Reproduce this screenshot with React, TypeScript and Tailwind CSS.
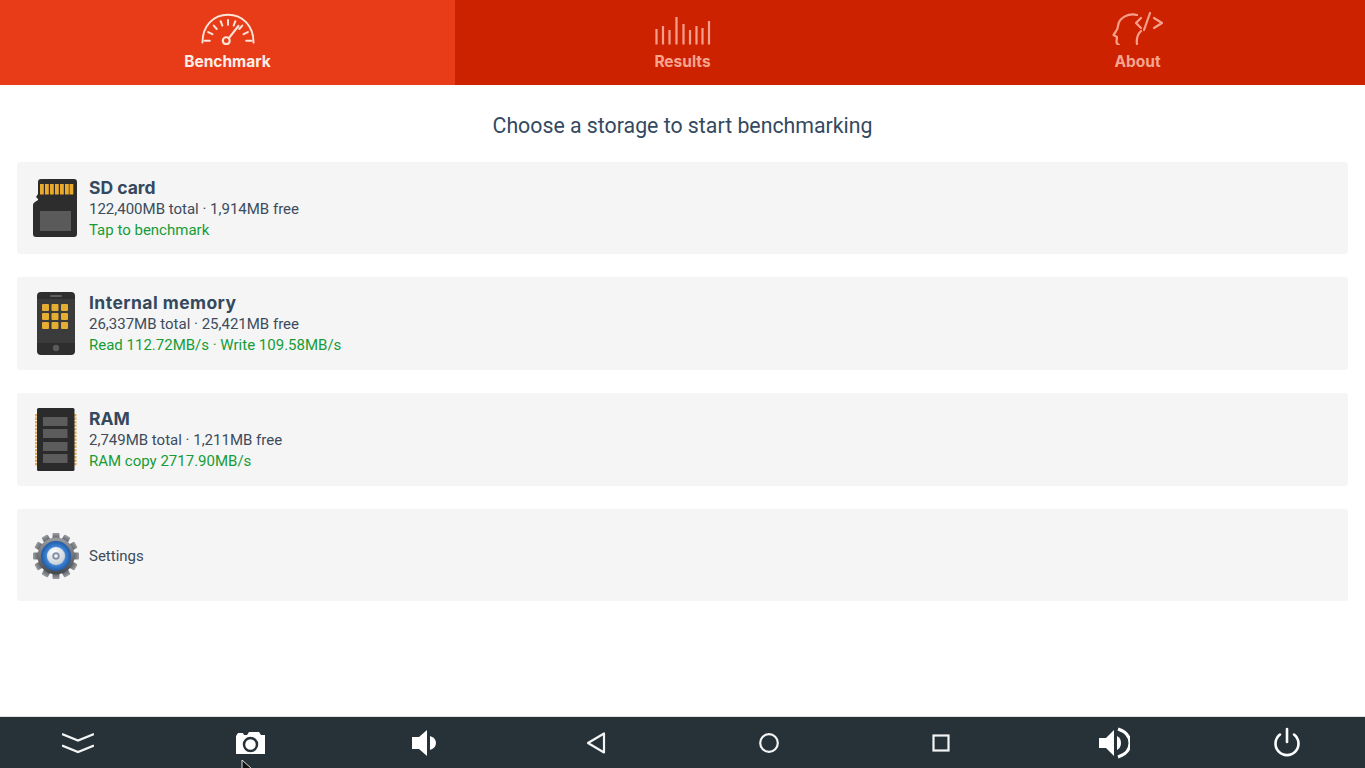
import React from "react";

function Gauge() {
  const ticks = [
    [4, 32, 10, 32], [8, 22, 13, 24.5], [14.500, 14.500, 18, 18.500], [22.500, 9.500, 24.500, 14.500], [31, 8, 31, 13.500],
    [39.500, 9.500, 37.500, 14.500], [47.500, 14.500, 44, 18.500], [54, 22, 49, 24.500], [58, 32, 52, 32],
  ];
  return (
    <svg width="54" height="32" viewBox="0 0 62 37" fill="none" stroke="#fde3d8" strokeWidth="2.300" strokeLinecap="round">
      <path d="M1.500 34 C1.500 15 14 2 31 2 C48 2 60.500 15 60.500 34" />
      {ticks.map((t, i) => (
        <line key={i} x1={t[0]} y1={t[1]} x2={t[2]} y2={t[3]} />
      ))}
      <circle cx="29" cy="32" r="4" strokeWidth="2.500" />
      <line x1="32" y1="29" x2="43" y2="15" strokeWidth="2.500" />
    </svg>
  );
}

function Bars() {
  const bars: [number, number][] = [
    [1.500, 12], [8, 9], [14.500, 13], [21.500, 0], [28.500, 7], [35, 13], [41.500, 9], [47.500, 11], [54, 4],
  ];
  return (
    <svg width="56" height="28" viewBox="0 0 56 28" fill="none" stroke="#f5a08a" strokeWidth="2.200">
      {bars.map((b, i) => (
        <line key={i} x1={b[0]} y1={b[1]} x2={b[0]} y2="27.500" />
      ))}
    </svg>
  );
}

function Head() {
  return (
    <svg width="52" height="34" viewBox="0 0 52 34" fill="none" stroke="#f5a08a" strokeWidth="2.200" strokeLinecap="round" strokeLinejoin="round">
      <path d="M25 4 C17 2 7 6 6 15 C6 19 3 21 1.500 24 L5 26 L4.500 31 C4.500 33 6 33.500 7 34" />
      <path d="M29 20 C26 23 24 27 25 33" />
      <path d="M29 7 L24 12 L29 17" />
      <path d="M38 2 L32 19" />
      <path d="M42 7 L50 12 L42 17" />
    </svg>
  );
}

function SdIcon() {
  return (
    <svg width="46" height="58" viewBox="0 0 46 58">
      <path d="M5 3 Q5 0 8 0 L41 0 Q44 0 44 3 L44 55 Q44 58 41 58 L3 58 Q0 58 0 55 L0 26 Q0 24 2 23 L5 21 L5 20 L3 18 L5 15 Z" fill="#2d2d2d" />
      {[7, 12, 17, 22, 27, 32, 36.500].map((x) => (
        <rect key={x} x={x} y="5" width="3.800" height="10.500" fill="#e9a92c" />
      ))}
      <rect x="7" y="32" width="31" height="20" fill="#5a5a5a" />
    </svg>
  );
}

function PhoneIcon() {
  const dots = [0, 1, 2];
  return (
    <svg width="38" height="63" viewBox="0 0 38 63">
      <rect x="0" y="0" width="38" height="63" rx="4" fill="#2e2e2e" />
      <rect x="0" y="7" width="38" height="44" fill="#3b3b3b" />
      <rect x="13" y="3" width="12" height="2" rx="1" fill="#5d5d5d" />
      {dots.map((r) =>
        dots.map((c) => <rect key={`${r}${c}`} x={5 + c * 9.500} y={12 + r * 9} width="7" height="7" rx="1" fill="#e6ad33" />)
      )}
      <circle cx="19" cy="56" r="3.200" fill="#5a5a5a" />
    </svg>
  );
}

function RamIcon() {
  return (
    <svg width="42" height="63" viewBox="0 0 42 63">
      {[...Array(15)].map((_, i) => (
        <g key={i}>
          <rect x="0" y={6 + i * 3.500} width="2.500" height="2.400" fill="#e2ad4d" />
          <rect x="39" y={6 + i * 3.500} width="2.500" height="2.400" fill="#e2ad4d" />
        </g>
      ))}
      <rect x="2" y="0" width="37.500" height="63" rx="1.500" fill="#2b2b2b" />
      {[9, 21, 34, 46].map((y) => (
        <rect key={y} x="8" y={y} width="24.500" height="9" fill="#5c5c5c" />
      ))}
    </svg>
  );
}

function GearIcon() {
  const teeth = [...Array(12)].map((_, i) => i * 30);
  return (
    <svg width="48" height="48" viewBox="0 0 48 48">
      <defs>
        <radialGradient id="disc" cx="50%" cy="50%" r="50%">
          <stop offset="45%" stopColor="#bcd0e6" />
          <stop offset="65%" stopColor="#3f82d2" />
          <stop offset="100%" stopColor="#1e5aa8" />
        </radialGradient>
        <radialGradient id="hub" cx="40%" cy="30%" r="75%">
          <stop offset="0%" stopColor="#ffffff" />
          <stop offset="100%" stopColor="#c5ccd4" />
        </radialGradient>
        <linearGradient id="gear" x1="0" y1="0" x2="0" y2="1">
          <stop offset="0%" stopColor="#9a9ea2" />
          <stop offset="100%" stopColor="#44474b" />
        </linearGradient>
      </defs>
      {teeth.map((a) => (
        <rect key={a} x="20.500" y="1" width="7" height="8" rx="1" fill="url(#gear)" transform={`rotate(${a} 24 24)`} />
      ))}
      <circle cx="24" cy="24" r="18.500" fill="url(#gear)" />
      <circle cx="24" cy="24" r="15" fill="url(#disc)" />
      <circle cx="24" cy="24" r="9" fill="url(#hub)" />
      <circle cx="24" cy="24" r="3.800" fill="#8593a5" />
      <circle cx="24" cy="24" r="1.800" fill="#f4f6f8" />
    </svg>
  );
}

function NavChevrons() {
  return (
    <svg width="32" height="24" viewBox="0 0 32 24" fill="none" stroke="#f3f4f4" strokeWidth="2.400">
      <path d="M0 3 L16 9.500 L32 3" />
      <path d="M0 14.500 L16 21 L32 14.500" />
    </svg>
  );
}
function NavCamera() {
  return (
    <svg width="32" height="24" viewBox="0 0 32 24">
      <path fill="#ffffff" d="M1 5 L3 2 L8 2 L9 4 L12 4 L14 1 L24 1 L26 4 L30 4 L30 23 L1 23 Z" />
      <circle cx="15.500" cy="13.500" r="6.500" fill="none" stroke="#263238" strokeWidth="2.500" />
    </svg>
  );
}
function NavVolLow() {
  return (
    <svg width="32" height="28" viewBox="0 0 32 28">
      <path fill="#ffffff" d="M5 8 L12 8 L20 1 L20 27 L12 20 L5 20 Z" />
      <path fill="#ffffff" d="M23 7 Q29 9 29 14 Q29 19 23 21 Z" />
    </svg>
  );
}
function NavBack() {
  return (
    <svg width="32" height="24" viewBox="0 0 32 24" fill="none" stroke="#f3f4f4" strokeWidth="2.200" strokeLinejoin="round">
      <path d="M24 2.500 L24 21.500 L8 12 Z" />
    </svg>
  );
}
function NavHome() {
  return (
    <svg width="32" height="24" viewBox="0 0 32 24" fill="none" stroke="#f3f4f4" strokeWidth="2.200">
      <circle cx="16" cy="12" r="8.800" />
    </svg>
  );
}
function NavRecent() {
  return (
    <svg width="32" height="24" viewBox="0 0 32 24" fill="none" stroke="#f3f4f4" strokeWidth="2.200">
      <rect x="7.500" y="4.500" width="15" height="15" />
    </svg>
  );
}
function NavVolHigh() {
  return (
    <svg width="32" height="32" viewBox="0 0 32 32" fill="none">
      <path fill="#ffffff" d="M1 11 L8 11 L16 3 L16 29 L8 21 L1 21 Z" />
      <path fill="#ffffff" d="M19 9 Q23 11 23 16 Q23 21 19 23 Z" />
      <path stroke="#ffffff" strokeWidth="3" d="M20 2 Q32 6 32 16 Q32 26 20 30" />
    </svg>
  );
}
function NavPower() {
  return (
    <svg width="32" height="32" viewBox="0 0 32 32" fill="none" stroke="#ffffff" strokeWidth="2.600" strokeLinecap="round">
      <path d="M16 2 L16 15" />
      <path d="M9 7.500 A11.500 11.500 0 1 0 23 7.500" />
    </svg>
  );
}

function Tab({ icon, label, active }: { icon: React.ReactNode; label: string; active?: boolean }) {
  return (
    <div className={active ? "flex-1 h-full flex flex-col items-center bg-[#e83c18]" : "flex-1 h-full flex flex-col items-center"}>
      <div className="h-[45px] flex items-end justify-center">{icon}</div>
      <div
        className={
          active
            ? "mt-[7px] text-[15.500px] leading-[20px] font-bold text-[#fdeee8]"
            : "mt-[7px] text-[15.500px] leading-[20px] font-bold text-[#f7a48f]"
        }
      >
        {label}
      </div>
    </div>
  );
}

function Card({
  icon,
  title,
  info,
  status,
  wide,
}: {
  icon: React.ReactNode;
  title: string;
  info: string;
  status: string;
  wide?: boolean;
}) {
  return (
    <div className="h-[92.670px] rounded-[3px] bg-[#f5f5f5] flex items-center">
      <div className="w-[72px] pl-[15px] pr-[9px] flex items-center justify-center shrink-0">{icon}</div>
      <div className="flex flex-col">
        <div
          className={
            wide
              ? "text-[17.500px] leading-[22px] font-bold text-[#34495e] tracking-[0.45px]"
              : "text-[17.500px] leading-[22px] font-bold text-[#34495e]"
          }
        >
          {title}
        </div>
        <div className="text-[15px] leading-[21px] text-[#3c4c5c] font-['Roboto',sans-serif]">{info}</div>
        <div className="text-[15px] leading-[20px] text-[#169c37] font-['Roboto',sans-serif]">{status}</div>
      </div>
    </div>
  );
}

export default function App() {
  return (
    <div className="w-[1365px] h-[768px] flex flex-col overflow-hidden bg-white font-['Inter',sans-serif]">
      <div className="h-[85px] flex bg-[#cc2200] shrink-0">
        <Tab icon={<Gauge />} label="Benchmark" active />
        <Tab icon={<Bars />} label="Results" />
        <Tab icon={<Head />} label="About" />
      </div>
      <div className="flex-1 flex flex-col px-[17px]">
        <div className="h-[76.800px] pt-[6px] flex items-center justify-center text-[21.300px] text-[#34495e] font-['Roboto',sans-serif]">
          Choose a storage to start benchmarking
        </div>
        <div className="flex flex-col gap-[23px]">
          <Card icon={<SdIcon />} title="SD card" info="122,400MB total · 1,914MB free" status="Tap to benchmark" />
          <Card
            icon={<PhoneIcon />}
            title="Internal memory"
            info="26,337MB total · 25,421MB free"
            status="Read 112.72MB/s · Write 109.58MB/s"
            wide
          />
          <Card icon={<RamIcon />} title="RAM" info="2,749MB total · 1,211MB free" status="RAM copy 2717.90MB/s" />
          <div className="h-[92.670px] rounded-[3px] bg-[#f5f5f5] flex items-center">
            <div className="w-[72px] pt-[1px] pl-[15px] pr-[9px] flex items-center justify-center shrink-0">
              <GearIcon />
            </div>
            <div className="pt-[2px] text-[15px] text-[#3c4c5c] font-['Roboto',sans-serif]">Settings</div>
          </div>
        </div>
      </div>
      <div className="relative h-[52px] shrink-0 border-t border-[#dfe3e5] bg-[#263238] flex items-center justify-between px-[62px]">
        <NavChevrons />
        <NavCamera />
        <NavVolLow />
        <NavBack />
        <NavHome />
        <NavRecent />
        <NavVolHigh />
        <NavPower />
        <svg className="absolute left-[241px] top-[43px]" width="12" height="9" viewBox="0 0 12 9">
          <path d="M1 0 L1 9 L11 9 Z" fill="#111" stroke="#ddd" strokeWidth="1" />
        </svg>
      </div>
    </div>
  );
}
